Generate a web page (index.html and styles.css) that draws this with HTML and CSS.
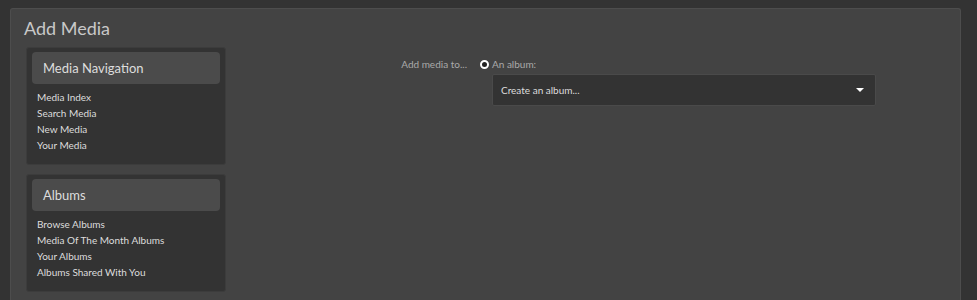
FILE: index.html
```html
<!DOCTYPE html>
<html lang="en">
<head>
    <meta charset="UTF-8">
    <title>Add Media</title>
    <link rel="stylesheet" href="styles.css">
</head>
<body>
    <div class="page">
        <h1 class="title">Add Media</h1>
        <div class="layout">
            <aside class="sidebar">
                <div class="block">
                    <h3 class="block-head">Media Navigation</h3>
                    <ul class="links">
                        <li><a href="#">Media Index</a></li>
                        <li><a href="#">Search Media</a></li>
                        <li><a href="#">New Media</a></li>
                        <li><a href="#">Your Media</a></li>
                    </ul>
                </div>
                <div class="block">
                    <h3 class="block-head">Albums</h3>
                    <ul class="links">
                        <li><a href="#">Browse Albums</a></li>
                        <li><a href="#">Media Of The Month Albums</a></li>
                        <li><a href="#">Your Albums</a></li>
                        <li><a href="#">Albums Shared With You</a></li>
                    </ul>
                </div>
            </aside>
            <form class="form">
                <div class="row">
                    <div class="label">Add media to...</div>
                    <div class="field">
                        <label class="radio"><span class="dot"></span>An album:</label>
                        <div class="select">
                            <span>Create an album...</span>
                            <span class="caret"></span>
                        </div>
                    </div>
                </div>
            </form>
        </div>
    </div>
</body>
</html>
```

FILE: styles.css
```css
body {
    margin: 0;
    padding: 8px 16px 0 10px;
    background-color: #333333;
    font-family: Lato, 'Open Sans', sans-serif;
    color: #dddddd;
    height: 300px;
    box-sizing: border-box;
    overflow: hidden;
}
.page {
    background: #434343;
    border: 1px solid #4d4d4d;
    border-bottom: none;
    border-radius: 3px 3px 0 0;
    height: 300px;
    padding: 0 15px 0 13px;
}
.title {
    margin: 0;
    padding: 7px 0 0 0;
    font-size: 18px;
    font-weight: normal;
    color: #c8c8c8;
    line-height: 24px;
    height: 31px;
}
.layout {
    display: flex;
    margin-left: 2px;
}
.sidebar {
    width: 200px;
    flex: none;
}
.block {
    background: #333333;
    border: 1px solid #3c3c3c;
    border-radius: 3px;
    padding: 4px 5px 11px 5px;
    margin-bottom: 9px;
}
.block-head {
    margin: 0;
    background: #4b4b4b;
    border-radius: 4px;
    font-size: 13px;
    font-weight: normal;
    color: #dddddd;
    height: 32px;
    line-height: 33px;
    padding: 0 11px;
}
.links {
    list-style: none;
    margin: 5px 0 0 0;
    padding: 0 0 0 5px;
}
.links li {
    font-size: 10px;
    line-height: 16px;
}
.links a {
    color: #dddddd;
    text-decoration: none;
}
.form {
    flex: 1;
}
.row {
    display: flex;
    padding-top: 9px;
}
.label {
    width: 241px;
    text-align: right;
    font-size: 10px;
    color: #aaaaaa;
    line-height: 16px;
    padding-right: 25px;
}
.field {
    width: 384px;
}
.radio {
    display: flex;
    align-items: center;
    font-size: 10px;
    color: #aaaaaa;
    line-height: 16px;
    margin-left: -12px;
}
.dot {
    width: 5px;
    height: 5px;
    border: 2px solid #ffffff;
    border-radius: 50%;
    background: #222222;
    margin-right: 3px;
}
.select {
    margin-top: 2px;
    height: 30px;
    background: #333333;
    border: 1px solid #4a4a4a;
    border-radius: 2px;
    display: flex;
    align-items: center;
    justify-content: space-between;
    padding: 0 11px 0 8px;
    font-size: 10px;
    color: #dddddd;
}
.caret {
    width: 0;
    height: 0;
    border-left: 4px solid transparent;
    border-right: 4px solid transparent;
    border-top: 4px solid #ffffff;
}
```
